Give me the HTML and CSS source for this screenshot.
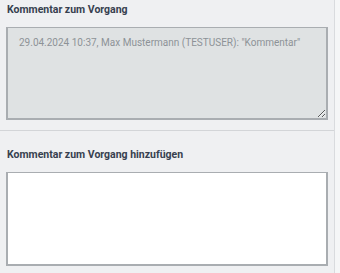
FILE: index.html
```html
<!DOCTYPE html>
<html lang="de">
<head>
    <meta charset="UTF-8">
    <meta name="viewport" content="width=device-width, initial-scale=1.0">
    <title>Kommentare</title>
    <link rel="stylesheet" href="styles.css">
</head>
<body>
    <div class="panel">
        <div class="section">
            <label for="history" class="section-label">Kommentar zum Vorgang</label>
            <textarea id="history" class="comment-box comment-history" readonly>29.04.2024 10:37, Max Mustermann (TESTUSER): "Kommentar"</textarea>
        </div>
        <div class="section section-new">
            <label for="newComment" class="section-label">Kommentar zum Vorgang hinzufügen</label>
            <textarea id="newComment" class="comment-box comment-new"></textarea>
        </div>
    </div>
</body>
</html>
```

FILE: styles.css
```css
* {
    margin: 0;
    padding: 0;
    box-sizing: border-box;
}

body {
    font-family: Roboto, "Liberation Sans", sans-serif;
    background: #f5f6f7;
    height: 273px;
    overflow: hidden;
}

.panel {
    width: 335px;
    height: 100%;
    background: #eff0f2;
    border-right: 1px solid #d9dbde;
}

.section {
    padding: 3px 7px 10px 6px;
    border-bottom: 1px solid #d3d5d8;
}

.section-new {
    padding-top: 17px;
    border-bottom: none;
}

.section-label {
    display: block;
    font-size: 10.5px;
    line-height: 14px;
    font-weight: 700;
    color: #37404f;
    margin-bottom: 10px;
    padding-left: 1px;
}

.comment-box {
    display: block;
    width: 322px;
    font-family: inherit;
    font-size: 10px;
    line-height: 14px;
    border: 1px solid #a9adb1;
    border-width: 1px 2px 2px 2px;
    outline: none;
}

.comment-history {
    height: 93px;
    padding: 8px 11px;
    background: #dfe2e3;
    color: #8d9297;
    resize: vertical;
}

.comment-new {
    height: 94px;
    padding: 8px 11px;
    background: #ffffff;
    color: #37404f;
    resize: none;
}
```
